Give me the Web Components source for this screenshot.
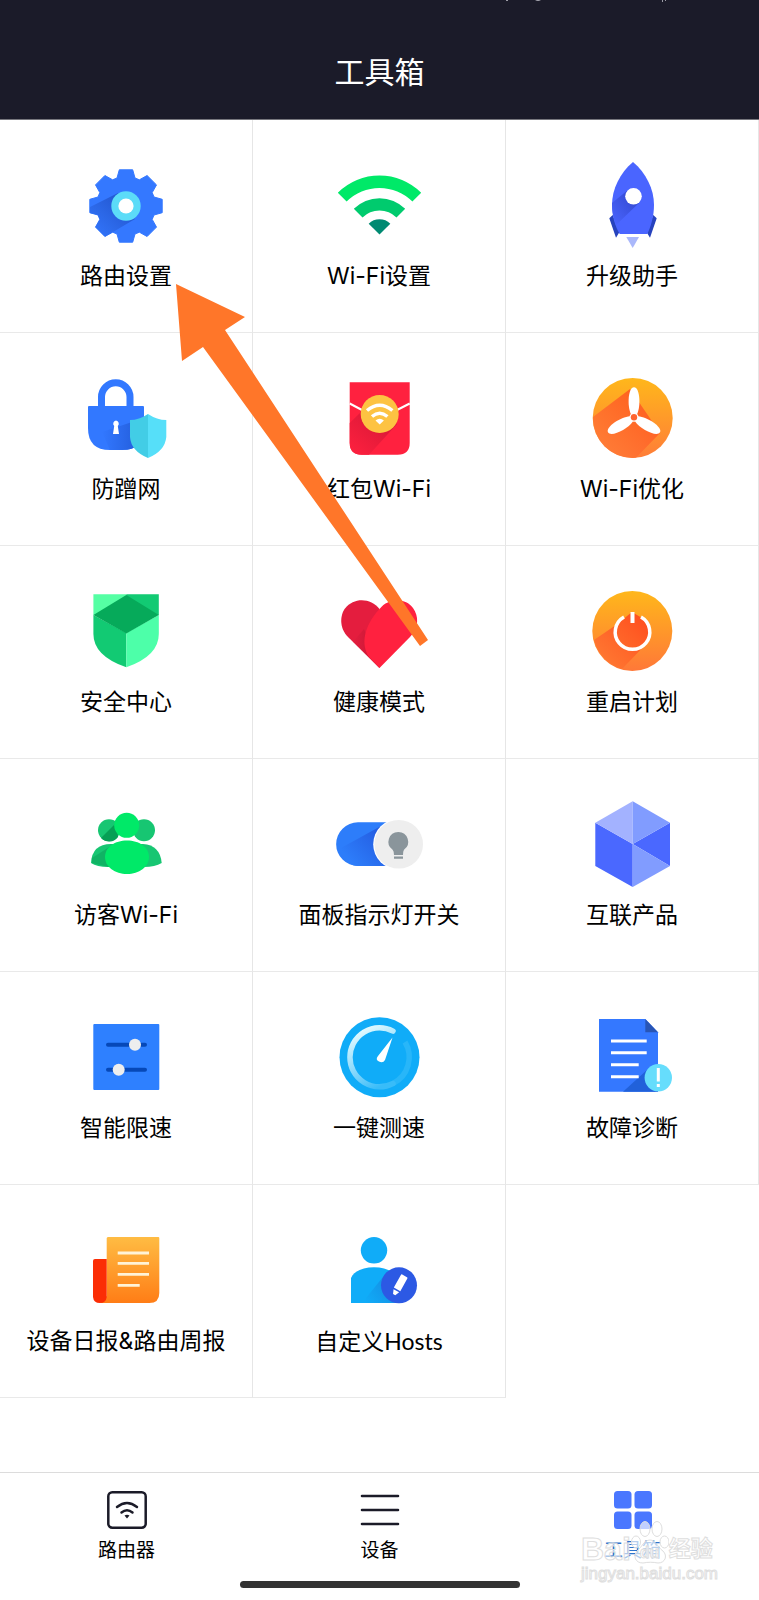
<!DOCTYPE html>
<html lang="zh-CN">
<head>
<meta charset="utf-8">
<meta name="viewport" content="width=device-width, initial-scale=1">
<title>工具箱</title>
<style>
  body { margin: 0; background: #fff; color: #000; font-family: Inter, "Noto Sans CJK SC", sans-serif; }
</style>
</head>
<body>
<toolbox-app></toolbox-app>

<script>
const ICONS = {
  gear: `<defs><linearGradient id="g" x1="1" y1="0" x2="0" y2="1"><stop offset="0" stop-color="#1f4fc4"/><stop offset="1" stop-color="#3478ff"/></linearGradient></defs>
    <g transform="translate(48 49)"><path fill="#3478ff" stroke="#3478ff" stroke-linejoin="round" d="M-9-28-6.7-36.2H6.7L9-28 13.4-26.2 21.1-30.5 30.5-21.1 26.2-13.4 28-9 36.2-6.7V6.7L28 9 26.2 13.4 30.5 21.1 21.1 30.5 13.4 26.2 9 28 6.7 36.2H-6.7L-9 28-13.4 26.2-21.1 30.5-30.5 21.1-26.2 13.4-28 9-36.2 6.7V-6.7L-28-9-26.2-13.4-30.5-21.1-21.1-30.5-13.4-26.2Z"/>
    <path fill="url(#g)" d="M-8-13-36 1V7L-28 9-26.2 13.4-30.5 21.1-21.1 30.5-13.4 26.2 9 13Z"/>
    <circle r="14.7" fill="#5cdcf8"/><circle r="7.6" fill="#fff"/></g>`,
  wifi: `<g transform="translate(48.5 77.5)"><path fill="#00e968" d="M-41.7-41.7A59 59 0 0 1 41.7-41.7L32.9-32.9A46.5 46.5 0 0 0-32.9-32.9Z"/>
    <path fill="#00cb6e" d="M-25.7-25.7A36.4 36.4 0 0 1 25.7-25.7L17-17A24 24 0 0 0-17-17Z"/>
    <path fill="#008a72" d="M-10.8-10.8A15.3 15.3 0 0 1 10.8-10.8L0 0Z"/></g>`,
  rocket: `<defs><linearGradient id="g" x1="1" y1="0" x2="0" y2="1"><stop offset="0" stop-color="#2f44c8"/><stop offset="1" stop-color="#4a65ff"/></linearGradient></defs>
    <path fill="#2743bd" d="M28.7 58 25.3 61.3 32 80.7 35.5 75ZM69.3 58 72.7 61.3 66 80.7 62.5 75Z"/>
    <path fill="#4a65ff" d="M49 5C62 16 70 32 70 48 70 59 67 69 63.3 77H35.7C31 69 28 59 28 48 28 32 36 16 49 5Z"/>
    <path fill="url(#g)" d="M44 33 28 46Q28 57 32 68L56 45Z"/>
    <circle cx="49.5" cy="39.3" r="8.3" fill="#fff"/><path fill="#aab8fb" d="M42.3 80H55L48.7 91Z"/>`,
  lock: `<defs><linearGradient id="g" x1="1" x2="0"><stop offset="0" stop-color="#1c4fc9"/><stop offset="1" stop-color="#3278ff"/></linearGradient></defs>
    <path fill="none" stroke="#3278ff" stroke-width="7" d="M23.5 38V27A14.2 14.2 0 0 1 52 27V38"/>
    <path fill="#3278ff" d="M11 36H65Q66 36 66 37V58Q66 80 44 80H32Q10 80 10 58V37Q10 36 11 36Z"/>
    <path fill="url(#g)" opacity=".75" d="M24 62 66 48V58Q66 80 44 80H32Z"/>
    <path fill="#fff" d="M38 50.5A3.2 3.2 0 0 1 39.8 56L41 64H35L36.2 56A3.2 3.2 0 0 1 38 50.5Z"/>
    <path fill="#42cde6" d="M70 44Q61 50 52 50V67Q53 81 70 88Z"/><path fill="#56dff9" d="M70 44Q79 50 88.3 50V67Q87 81 70 88Z"/>`,
  packet: `<defs><linearGradient id="g" x1="1" y1="0" x2="0" y2="1"><stop offset="0" stop-color="#d01535"/><stop offset="1" stop-color="#ff213f"/></linearGradient></defs>
    <path fill="#ff213f" d="M18.7 12.3H78.7V72.7Q78.7 84.7 66.7 84.7H30.7Q18.7 84.7 18.7 72.7Z"/>
    <path fill="url(#g)" d="M30 42 18.7 53V72.7Q18.7 84.7 30.7 84.7H38L66 54Z"/>
    <path stroke="#fff" stroke-width="2" d="M18.7 33.5 31 40M78.7 33.5 66 40"/>
    <circle cx="48.7" cy="44" r="19" fill="#fdc342"/>
    <path fill="none" stroke="#fff" stroke-width="3.5" d="M36 40.5Q48.7 30 61.4 40.5M41 46.5Q48.7 40 56.4 46.5"/><path fill="#fff" d="M44.5 50.5Q48.7 47 52.9 50.5L48.7 54.5Z"/>`,
  fan: `<defs><linearGradient id="b" x2="0" y2="1"><stop stop-color="#ffb71b"/><stop offset="1" stop-color="#ff7d38"/></linearGradient>
    <linearGradient id="g" x1=".8" y1=".2" x2=".2" y2=".9"><stop stop-color="#ff5520"/><stop offset="1" stop-color="#ff7a36"/></linearGradient></defs>
    <circle cx="48.7" cy="48" r="40" fill="url(#b)"/><path fill="url(#g)" opacity=".85" d="M46 19 9 47A40 40 0 0 0 52 87.8L76 63Z"/>
    <g transform="translate(50 47.3)"><g fill="#fff"><path d="M-3-3C-7-11-6-30 0-30S7-11 3-3Z"/><path transform="rotate(120)" d="M-3-3C-7-11-6-30 0-30S7-11 3-3Z"/><path transform="rotate(240)" d="M-3-3C-7-11-6-30 0-30S7-11 3-3Z"/><circle r="4.5"/></g><circle r="3.2" fill="#ff6530"/></g>`,
  shield: `<path fill="#55ffa4" d="M15.4 11.3H48.3V32H15.4Z"/><path fill="#12ca73" d="M48.3 11.3H80.8V32H48.3ZM15.4 32 48.3 50V84.3Q15.4 73 15.4 51Z"/>
    <path fill="#4dffa9" d="M80.8 32 48.3 50V84.3Q80.8 73 80.8 51Z"/><path fill="#06aa5a" d="M48.3 12 80.8 32 48.3 50.6 15.4 32Z"/>`,
  heart: `<defs><linearGradient id="g" x1="1" x2="0"><stop offset="0" stop-color="#be1733"/><stop offset="1" stop-color="#e41d3e"/></linearGradient></defs>
    <path fill="#e41d3e" d="M48.5 85 17 54C8 45 9 32 14 25.500 23 14 40 15 48.5 26Z"/><path fill="url(#g)" d="M33 46 22 58.5 48.5 85Z"/>
    <path fill="#ff213f" d="M48.5 26C58 14 75 15 82 25 88 33 88 45 79 54L48.5 85 38 74C30 62 32 44 48.5 26Z"/>`,
  power: `<defs><linearGradient id="b" x2="0" y2="1"><stop stop-color="#ffb71b"/><stop offset="1" stop-color="#ff7838"/></linearGradient>
    <linearGradient id="g" x1="1" y1="0" x2="0" y2="1"><stop stop-color="#ff4a1c"/><stop offset="1" stop-color="#ff7f35"/></linearGradient></defs>
    <circle cx="48.3" cy="48" r="40" fill="url(#b)"/><path fill="url(#g)" d="M48 29 32 42 10 57A40 40 0 0 0 38 86L64 59A17 17 0 0 0 58 35Z"/>
    <path fill="none" stroke="#fff" stroke-width="3.5" d="M40 34A17.3 17.3 0 1 0 57 34"/><path stroke="#fff" stroke-width="4" d="M48.5 29V40"/>`,
  guests: `<g fill="#17c672"><circle cx="31" cy="34.3" r="11"/><circle cx="66" cy="34.3" r="11"/><path d="M13 67Q14 48 33 48H65Q82 49 83.7 67 77 71 66 71H30Q19 71 13 67Z"/></g>
    <path fill="#079f55" d="M38.5 26.5 23 42A11 11 0 0 0 40 41Z"/><path fill="#0ba75c" opacity=".6" d="M36 48 14 62V67L31 71Z"/>
    <circle cx="48.7" cy="29.3" r="12.5" fill="#00e968"/><path fill="#00e968" d="M27 61C27 51 37 44.5 49 44.5S71 51 71 61 61 78 49 78 27 71 27 61Z"/>`,
  toggle: `<defs><linearGradient id="g" x1="1" y1="0" x2="0" y2=".6"><stop stop-color="#2050d8"/><stop offset="1" stop-color="#2d7dfa"/></linearGradient></defs>
    <path fill="#2d7dfa" d="M27 26.3H66V70H27A21.85 21.85 0 0 1 27 26.3Z"/><path fill="url(#g)" d="M50 30 10 52Q14 70 28 70H66Z"/>
    <circle cx="67.7" cy="48.3" r="25.5" fill="#fff"/><circle cx="67.7" cy="48.3" r="24.3" fill="#eee"/>
    <path fill="#8a959b" d="M67.3 36A9.8 9.8 0 0 1 73 53.8Q72 55 72 59H63Q63 55 61.6 53.8A9.8 9.8 0 0 1 67.3 36ZM63 60.5H72V62.7H63Z"/>`,
  cube: `<path fill="#4a68ff" d="M11.3 26.7 48.7 48V91L11.3 70ZM48.7 48 86 26.7V70Z"/><path fill="#a3b2ff" d="M48.7 5.3V48L11.3 26.7Z"/><path fill="#819cff" d="M48.7 5.3 86 26.7 48.7 48ZM48.7 48 86 70 48.7 91Z"/>`,
  limit: `<rect x="15.3" y="15" width="66" height="66" rx="1" fill="#2e80ff"/><path stroke="#0648b8" stroke-width="4" stroke-linecap="round" d="M30 35.7H67M30 60.7H67"/><circle cx="57" cy="35.7" r="6" fill="#eee"/><circle cx="40.7" cy="60.7" r="6" fill="#eee"/>`,
  gauge: `<defs><linearGradient id="g" x1=".3" y1="0" x2=".7" y2="1"><stop stop-color="#e5fbff"/><stop offset=".75" stop-color="#6bcdfa"/><stop offset="1" stop-color="#38bcf9"/></linearGradient></defs>
    <circle cx="48.5" cy="48.3" r="40" fill="#10acf8"/><path fill="none" stroke="#28b6f9" stroke-width="5.5" d="M74 33A29.5 29.5 0 0 1 62 74.5"/><path fill="none" stroke="url(#g)" stroke-width="5.5" stroke-linecap="round" d="M62 22.1A29.5 29.5 0 1 0 62 74.5"/>
    <path fill="#fff" d="M61.5 28.5 54 51Q52 54.5 48 52.5T47 47Z"/>`,
  doc: `<path fill="#3478ff" d="M15 10H61.3L74 23.3V82.7H15Z"/><path fill="#2855b5" d="M61.3 10V23.3H74Z"/><path fill="#2161da" d="M64 60 39 82.7H74V65Z"/>
    <path stroke="#fff" stroke-width="3" d="M27 32H62.7M27 43.7H62.7M27 55.7H54.7M27 67.7H54.7"/><circle cx="74.3" cy="68.7" r="13.7" fill="#66ddfc"/><path stroke="#fff" stroke-width="3" d="M74.3 59V72.5M74.3 75V78"/>`,
  news: `<defs><linearGradient id="g" x2="0" y2="1"><stop stop-color="#ffbc43"/><stop offset="1" stop-color="#ff7d16"/></linearGradient></defs>
    <path fill="url(#g)" d="M29.7 15H80.3Q81.3 15 81.3 16V71Q81.3 81 71.3 81H22L28.7 74V16Z"/><path fill="#fb2d05" d="M17 37H28.7V75Q28 81 21.8 81T15 75V39Q15 37 17 37Z"/>
    <path stroke="#fff3d7" stroke-width="2.8" d="M39.7 31H71M39.7 41.3H71M39.7 52.3H71M39.7 63.3H61.7"/>`,
  user: `<defs><linearGradient id="g" x1="1" y1=".2" x2="0" y2=".8"><stop stop-color="#1686de"/><stop offset="1" stop-color="#10acf8"/></linearGradient></defs>
    <g fill="#10acf8"><circle cx="43" cy="28.3" r="13.2"/><path d="M20 81V56C23 49 32 45.3 43 45.3S63 49 66 56V81Z"/></g><path fill="url(#g)" d="M56 50 31 81H68Z"/>
    <circle cx="68" cy="63.3" r="18" fill="#2c59e4"/><g transform="translate(68.5 63) rotate(29)" fill="#fff"><path d="M-3.7-9.5Q-3.7-10.5-2.7-10.5H2.7Q3.7-10.5 3.7-9.5V5H-3.7ZM-3.2 6.5H3.2L1.3 11H-1.3Z"/></g>`
};

const TAB_ICONS = {
  router: `<g fill="none" stroke="#1b1b28" stroke-width="2.5"><rect x="1.3" y="2.3" width="37.4" height="35.4" rx="4"/><path stroke-linecap="round" d="M10 17Q20 9 30 17M14.5 22.5Q20 18 25.5 22.5"/></g><path fill="#1b1b28" d="M17.5 25.5Q20 24 22.5 25.5L20 28.5Z"/>`,
  list: `<path stroke="#1b1b28" stroke-width="2.6" stroke-linecap="round" d="M2 6H38M2 20H38M2 34H38"/>`,
  grid: `<g fill="#4a77ff"><rect x="1" y="1" width="17.5" height="17.5" rx="3.5"/><rect x="21.5" y="1" width="17.5" height="17.5" rx="3.5"/><rect x="1" y="21.5" width="17.5" height="17.5" rx="3.5"/><rect x="21.5" y="21.5" width="17.5" height="17.5" rx="3.5"/></g>`
};

function mount(el, html) {
  const t = document.createElement('template');
  t.innerHTML = html;
  el.attachShadow({ mode: 'open' }).append(t.content.cloneNode(true));
}

customElements.define('app-header', class extends HTMLElement {
  constructor() {
    super();
    mount(this, `<style>
      :host { display: block; position: relative; background: #1b1b29; border-bottom: 1px solid #77777d; }
      header { display: flex; justify-content: center; padding: 50px 16px 25px; }
      h1 { margin: 0; font-size: 30px; line-height: 44px; font-weight: 400; color: #fff; }
      svg { position: absolute; top: 0; right: 88px; }
    </style>
    <svg width="168" height="2" aria-hidden="true"><path fill="#9c9ca6" d="M3 0H5V1H3ZM32 0H38L36 1H34ZM159 0H160V2H159ZM162 0H163V1H162Z"/></svg>
    <header><h1><slot></slot></h1></header>`);
  }
});

customElements.define('tool-tile', class extends HTMLElement {
  constructor() {
    super();
    mount(this, `<style>
      :host { display: block; border-right: 1px solid #e6e6e6; border-bottom: 1px solid #e9e9e9; }
      button { display: flex; flex-direction: column; align-items: center; gap: 7px; width: 100%;
        padding: 37px 0 40px; border: 0; background: none; color: inherit; font: inherit; cursor: pointer; }
      svg { display: block; width: 96px; height: 96px; }
      span { font-size: 23px; line-height: 32px; white-space: nowrap; }
    </style>
    <button type="button"><svg viewBox="0 0 96 96" aria-hidden="true">${ICONS[this.getAttribute('icon')]}</svg><span><slot></slot></span></button>`);
  }
});

customElements.define('pointer-arrow', class extends HTMLElement {
  constructor() {
    super();
    mount(this, `<style>
      :host { display: block; pointer-events: none; }
      svg { display: block; }
    </style>
    <svg width="254" height="364" aria-hidden="true"><path fill="#ff7629" d="M1 1 70 34 50 47 253 357 245 363 28 64 7 78Z"/></svg>`);
  }
});

customElements.define('tool-grid', class extends HTMLElement {
  constructor() {
    super();
    mount(this, `<style>
      :host { display: block; position: relative; }
      main { display: grid; grid-template-columns: repeat(3, 1fr); }
      pointer-arrow { position: absolute; left: 175px; top: 163px; }
    </style>
    <main><slot></slot></main><pointer-arrow></pointer-arrow>`);
  }
});

customElements.define('nav-tab', class extends HTMLElement {
  constructor() {
    super();
    mount(this, `<style>
      :host { display: block; flex: 1; }
      :host([active]) { color: #2e74cc; }
      button { display: flex; flex-direction: column; align-items: center; gap: 9px; width: 100%;
        padding: 0; border: 0; background: none; color: inherit; font: inherit; cursor: pointer; }
      svg { display: block; width: 40px; height: 40px; }
      span { font-size: 19px; line-height: 24px; }
    </style>
    <button type="button"><svg viewBox="0 0 40 40" aria-hidden="true">${TAB_ICONS[this.getAttribute('icon')]}</svg><span><slot></slot></span></button>`);
  }
});

customElements.define('page-watermark', class extends HTMLElement {
  constructor() {
    super();
    mount(this, `<style>
      :host { display: block; pointer-events: none; color: #fff9; font-family: "Liberation Sans", "Noto Sans CJK SC", sans-serif; font-weight: 700;
        -webkit-text-stroke: 1px #dedede; }
      .brand { display: flex; align-items: flex-end; font-size: 32px; line-height: 30px; }
      .paw { position: relative; width: 38px; height: 44px; }
      .paw svg { display: block; }
      .paw span { position: absolute; left: 9px; bottom: 1px; font-size: 16px; line-height: 20px; }
      .cn { font-size: 22px; }
      .url { font-size: 17px; line-height: 20px; font-weight: 400; }
    </style>
    <div class="brand"><span>Bai</span><span class="paw"><svg width="38" height="44" aria-hidden="true"><g fill="#fff" fill-opacity=".65" stroke="#dedede"><ellipse cx="5" cy="22" rx="4.5" ry="6"/><ellipse cx="14" cy="9" rx="5" ry="7.5"/><ellipse cx="26" cy="9" rx="5" ry="7.5"/><ellipse cx="33.5" cy="22" rx="4.5" ry="6"/><path d="M19 20C25 20 26 27 32 31 37 36 34 43 27 43 22 42 17 42 12 43 4 43 2 36 6 31 11 27 13 20 19 20Z"/></g></svg><span>du</span></span><span class="cn">经验</span></div>
    <div class="url">jingyan.baidu.com</div>`);
  }
});

customElements.define('tab-bar', class extends HTMLElement {
  constructor() {
    super();
    mount(this, `<style>
      :host { display: block; position: relative; border-top: 1px solid #dcdcdc; }
      nav { display: flex; padding-top: 17px; }
      .home { width: 280px; height: 7px; margin: 18px auto 12px; border-radius: 4px; background: #333; }
      page-watermark { position: absolute; right: 41px; bottom: 16px; }
    </style>
    <nav><slot></slot></nav><div class="home"></div><page-watermark></page-watermark>`);
  }
});

customElements.define('toolbox-app', class extends HTMLElement {
  constructor() {
    super();
    mount(this, `<style>
      :host { display: flex; flex-direction: column; min-height: 100vh; }
      tool-grid { flex: 1; }
      .latin { font-family: Lato, "Noto Sans CJK SC", sans-serif; }
    </style>
    <app-header>工具箱</app-header>
    <tool-grid>
      <tool-tile icon="gear">路由设置</tool-tile>
      <tool-tile icon="wifi">Wi-Fi设置</tool-tile>
      <tool-tile icon="rocket">升级助手</tool-tile>
      <tool-tile icon="lock">防蹭网</tool-tile>
      <tool-tile icon="packet">红包Wi-Fi</tool-tile>
      <tool-tile icon="fan">Wi-Fi优化</tool-tile>
      <tool-tile icon="shield">安全中心</tool-tile>
      <tool-tile icon="heart">健康模式</tool-tile>
      <tool-tile icon="power">重启计划</tool-tile>
      <tool-tile icon="guests">访客Wi-Fi</tool-tile>
      <tool-tile icon="toggle">面板指示灯开关</tool-tile>
      <tool-tile icon="cube">互联产品</tool-tile>
      <tool-tile icon="limit">智能限速</tool-tile>
      <tool-tile icon="gauge">一键测速</tool-tile>
      <tool-tile icon="doc">故障诊断</tool-tile>
      <tool-tile icon="news">设备日报&amp;路由周报</tool-tile>
      <tool-tile icon="user" class="latin">自定义Hosts</tool-tile>
    </tool-grid>
    <tab-bar>
      <nav-tab icon="router">路由器</nav-tab>
      <nav-tab icon="list">设备</nav-tab>
      <nav-tab icon="grid" active>工具箱</nav-tab>
    </tab-bar>`);
  }
});
</script>
</body>
</html>
